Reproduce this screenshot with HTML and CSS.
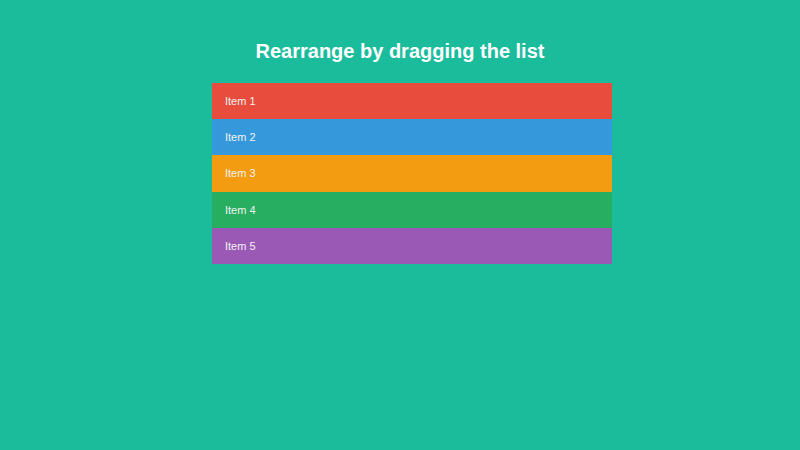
FILE: index.html
```html
<!DOCTYPE html>
<html>
<head>
<meta charset="utf-8">
<link rel="stylesheet" href="styles.css">
</head>
<body>
<h1 class="title">Rearrange by dragging the list</h1>
<ul class="list">
  <li class="item item-red">Item 1</li>
  <li class="item item-blue">Item 2</li>
  <li class="item item-orange">Item 3</li>
  <li class="item item-green">Item 4</li>
  <li class="item item-purple">Item 5</li>
</ul>
</body>
</html>
```
FILE: styles.css
```css
html, body {
  margin: 0;
  padding: 0;
}
body {
  background: #1abc9c;
  font-family: "Liberation Sans", Arial, sans-serif;
  width: 800px;
  height: 450px;
  overflow: hidden;
}
.title {
  margin: 0;
  padding-top: 39px;
  text-align: center;
  color: #fff;
  font-size: 20px;
  line-height: 24px;
  font-weight: bold;
}
.list {
  list-style: none;
  margin: 20px 0 0 212px;
  padding: 0;
  width: 400px;
}
.item {
  height: 36.2px;
  display: flex;
  align-items: center;
  padding-left: 13px;
  box-sizing: border-box;
  color: #f3f3f3;
  font-size: 11px;
}
.item-red { background: #e74c3c; }
.item-blue { background: #3498db; }
.item-orange { background: #f39c12; }
.item-green { background: #27ae60; }
.item-purple { background: #9b59b6; }
```
